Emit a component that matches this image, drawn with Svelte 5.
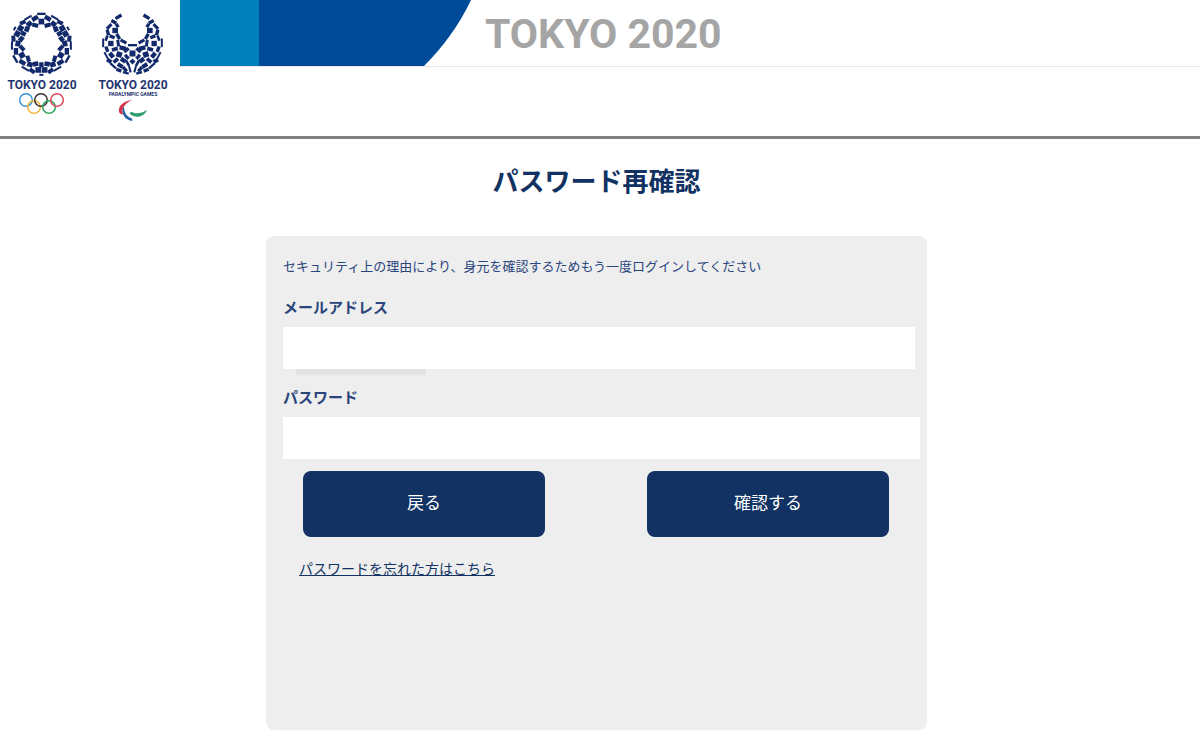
<script lang="ts">
  let email = "";
  let password = "";

  type Tile = [x: number, y: number, w: number, h: number, rotation: number];

  const rings = [
    { x: 26, y: 100, color: "#3b94d2" },
    { x: 34, y: 107, color: "#f0b93c" },
    { x: 41, y: 100, color: "#3b3335" },
    { x: 49, y: 107, color: "#30a15c" },
    { x: 57, y: 100, color: "#e0475c" },
  ];

  // one third of the wreath: [angle, radius, width, height, tilt]
  const sector = [
    [0, 90, 25, 7, 0],
    [0, 67, 17, 17, 0],
    [14, 79, 20, 13, 16],
    [-14, 79, 20, 13, -16],
    [18, 59, 18, 12, -32],
    [-18, 59, 18, 12, 32],
    [27, 88, 25, 6, 4],
    [-27, 88, 25, 6, -4],
    [31, 70, 17, 15, 10],
    [-31, 70, 17, 15, -10],
    [41, 85, 18, 12, -16],
    [-41, 85, 18, 12, 16],
    [44, 62, 16, 14, 25],
    [-44, 62, 16, 14, -25],
    [53, 78, 17, 17, 8],
    [-53, 78, 17, 17, -8],
    [60, 62, 13, 15, 0],
    [60, 92, 12, 6, 0],
  ];

  const wreath = [0, 120, 240].flatMap((turn) =>
    sector.map(([angle, r, w, h, tilt]): Tile => {
      const a = ((turn + angle) * Math.PI) / 180;
      return [r * Math.sin(a), -r * Math.cos(a), w, h, turn + angle + tilt];
    })
  );

  // left half of the bowl, mirrored for the right
  const bowlHalf: Tile[] = [
    [63, 22, 21, 10, -32],
    [49, 37, 17, 10, 28],
    [59, 48, 12, 10, 60],
    [35, 51, 20, 9, -45],
    [53, 63, 17, 16, 0],
    [31, 69, 18, 10, 76],
    [44, 82, 16, 10, 20],
    [62, 81, 18, 10, 60],
    [17, 100, 26, 6, 90],
    [40, 102, 16, 16, 0],
    [27, 86, 16, 8, -70],
    [62, 101, 20, 9, 82],
    [78, 96, 20, 9, 30],
    [28, 119, 17, 10, 70],
    [52, 119, 18, 11, -15],
    [76, 116, 20, 13, 12],
    [26, 138, 23, 6, 62],
    [42, 137, 17, 13, 50],
    [65, 135, 17, 16, 18],
    [87, 122, 17, 10, -40],
    [88, 142, 16, 10, 50],
    [35, 154, 15, 12, 32],
    [55, 153, 17, 11, -40],
    [77, 152, 16, 13, 35],
    [47, 169, 24, 7, 42],
    [68, 168, 17, 12, 32],
    [90, 161, 19, 8, 60],
    [64, 182, 16, 10, 20],
    [82, 179, 18, 10, 50],
    [85, 190, 18, 7, 15],
    [97, 179, 20, 6, 75],
  ];

  const bowl: Tile[] = [
    ...bowlHalf,
    ...bowlHalf.map(([x, y, w, h, r]): Tile => [210 - x, y, w, h, -r]),
    [105, 107, 27, 7, 0],
    [105, 132, 18, 18, 0],
    [105, 156, 13, 13, 45],
  ];
</script>

{#snippet tiles(list: Tile[])}
  {#each list as [x, y, w, h, r]}
    <rect
      x={-w / 2}
      y={-h / 2}
      width={w}
      height={h}
      transform={`translate(${x} ${y}) rotate(${r})`}
    />
  {/each}
{/snippet}

<header class="site-header">
  <div class="logos">
    <svg width="90" height="130" viewBox="0 0 90 130" role="img" aria-label="TOKYO 2020">
      <g class="emblem" transform="translate(41.4 44) scale(0.335)">
        {@render tiles(wreath)}
      </g>
      <text x="42" y="89" class="logo-name">TOKYO 2020</text>
      {#each rings as ring}
        <circle
          cx={ring.x}
          cy={ring.y}
          r="6.3"
          fill="none"
          stroke={ring.color}
          stroke-width="1.5"
        />
      {/each}
    </svg>
    <svg width="90" height="130" viewBox="0 0 90 130" role="img" aria-label="TOKYO 2020 PARALYMPIC GAMES">
      <g class="emblem" transform="translate(7.5 9.5) scale(0.3333)">
        {@render tiles(bowl)}
      </g>
      <text x="43" y="89" class="logo-name">TOKYO 2020</text>
      <text x="43" y="96" class="logo-sub">PARALYMPIC GAMES</text>
      <path d="M42 100C33 101 28 106 29 112C30 114 32 115 33 114C31 109 35 103 42 100Z" fill="#d8364c" />
      <path d="M34 106C30 113 35 120 42 121C43 120 42 119 41 118C36 116 34 112 34 106Z" fill="#205fa5" />
      <path d="M40 114C46 119 54 117 57 110C54 112 47 115 42 112C40 112 39 113 40 114Z" fill="#2c9c6a" />
    </svg>
  </div>
  <div class="banner">
    <svg class="banner-shape" width="291" height="66" viewBox="0 0 291 66" aria-hidden="true">
      <rect width="79" height="66" fill="#0081bd" />
      <path d="M79 0H291Q274 36 244 66H79Z" fill="#004b99" />
    </svg>
    <span class="banner-title">TOKYO 2020</span>
  </div>
</header>

<main>
  <h1>パスワード再確認</h1>

  <form class="card" on:submit|preventDefault>
    <p class="lead">
      セキュリティ上の理由により、身元を確認するためもう一度ログインしてください
    </p>

    <div class="field field--email">
      <label for="email">メールアドレス</label>
      <input id="email" type="email" bind:value={email} />
    </div>

    <div class="field">
      <label for="password">パスワード</label>
      <input id="password" type="password" bind:value={password} />
    </div>

    <div class="actions">
      <button type="button">戻る</button>
      <button type="submit">確認する</button>
    </div>

    <a class="forgot" href="#forgot">パスワードを忘れた方はこちら</a>
  </form>
</main>

<style>
  :global(body) {
    background: #fff;
    color: #113262;
    font-family: "Noto Sans CJK JP", sans-serif;
  }

  .site-header {
    display: flex;
    align-items: flex-start;
    height: 136px;
    border-bottom: 3px solid #808080;
  }

  .logos {
    display: flex;
    flex: 0 0 180px;
  }

  .emblem {
    fill: #12296b;
  }

  .logo-name,
  .logo-sub {
    font-family: Roboto, "Liberation Sans", sans-serif;
    font-weight: 700;
    text-anchor: middle;
    fill: #1f3570;
  }

  .logo-name {
    font-size: 12px;
  }

  .logo-sub {
    font-size: 5px;
  }

  .banner {
    display: flex;
    align-items: center;
    flex: 1;
    gap: 14px;
    height: 66px;
    border-bottom: 1px solid #f0e6e0;
  }

  .banner-shape {
    flex: none;
  }

  .banner-title {
    padding-top: 2px;
    font-family: Roboto, "Liberation Sans", sans-serif;
    font-size: 41px;
    font-weight: 700;
    line-height: 64px;
    color: #a5a5a5;
    white-space: nowrap;
  }

  main {
    padding: 21px 23px 10px 16px;
  }

  h1 {
    margin: 0 0 36px;
    font-size: 26px;
    font-weight: 700;
    line-height: 40px;
    text-align: center;
  }

  .card {
    box-sizing: border-box;
    max-width: 661px;
    margin: 0 auto;
    padding: 20px 7px 150px 17px;
    border-radius: 8px;
    background: #eee;
  }

  .lead {
    margin: 0 0 19px;
    font-size: 13px;
    line-height: 20px;
    color: #2b457d;
  }

  .field {
    position: relative;
    margin-bottom: 16px;
  }

  .field--email {
    margin-right: 5px;
  }

  .field--email::after {
    content: "";
    position: absolute;
    top: 100%;
    left: 13px;
    width: 130px;
    height: 6px;
    background: #e3e3e3;
  }

  label {
    display: block;
    margin-bottom: 8px;
    font-size: 15px;
    font-weight: 700;
    line-height: 24px;
    color: #29457c;
  }

  input {
    display: block;
    box-sizing: border-box;
    width: 100%;
    height: 42px;
    padding: 0 12px;
    border: 0;
    background: #fff;
    font: inherit;
    font-size: 16px;
  }

  .actions {
    display: flex;
    justify-content: space-between;
    padding: 0 31px 0 20px;
    margin-top: -4px;
  }

  button {
    flex: 0 1 242px;
    height: 66px;
    padding: 0 0 6px;
    border: 0;
    border-radius: 8px;
    background: #113262;
    color: #fff;
    font: inherit;
    font-size: 17px;
    cursor: pointer;
  }

  .forgot {
    display: inline-block;
    margin: 19px 0 0 16px;
    font-size: 14px;
    line-height: 24px;
    color: #113262;
  }
</style>
